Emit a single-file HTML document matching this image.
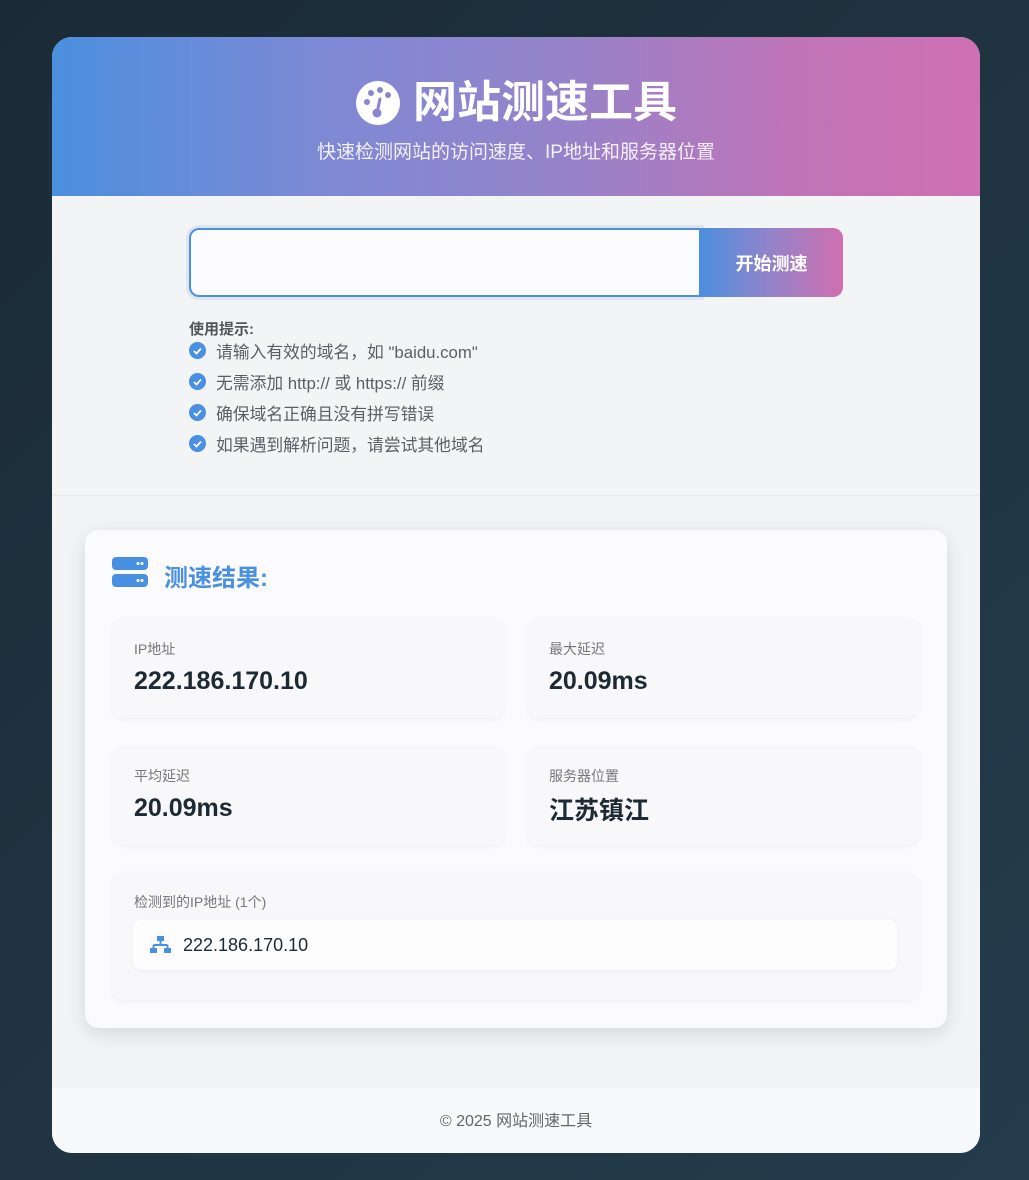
<!DOCTYPE html>
<html><head><meta charset="utf-8"><style>
*{box-sizing:border-box;margin:0;padding:0}
body{width:1029px;height:1180px;background:linear-gradient(135deg,#1b2b36,#243c4c);font-family:"Liberation Sans","Noto Sans CJK SC",sans-serif;position:relative;overflow:hidden}
.wrap{position:absolute;left:52px;top:37px;width:928px;height:1116px;border-radius:20px;overflow:hidden;background:#f3f4f5}
.hdr{height:159px;background:linear-gradient(90deg,#4c8fdf 0%,#7f89d4 30%,#9583c9 55%,#c074b8 80%,#cf70b2 100%);text-align:center;color:#fff}
.hdr h1{padding-top:41px;font-size:44px;font-weight:bold;line-height:50px;display:flex;justify-content:center;align-items:center;gap:12px}
.hdr p{margin-top:9px;font-size:19px;color:#f4f0fa}
.inp{position:absolute;left:137px;top:191px;width:512px;height:69px;border:2px solid #4a90e2;border-radius:10px 0 0 10px;background:#fbfbfd;box-shadow:0 0 0 3px #dfe5ec}
.btn{position:absolute;left:648px;top:191px;width:143px;height:69px;border-radius:0 10px 10px 0;background:linear-gradient(90deg,#4c8fdf,#9583c9,#d06fb0);color:#fff;font-weight:bold;font-size:18px;display:flex;align-items:center;justify-content:center}
.tips{position:absolute;left:137px;top:283px;color:#5a5f66;font-size:16.8px}
.tips b{display:block;font-size:15px;color:#555;line-height:20px}
.tips div{display:flex;align-items:center;height:31px}
.tips b+div{margin-top:-5px}
.ck{width:17px;height:17px;border-radius:50%;background:#4a90e2;margin-right:10px;display:inline-flex;align-items:center;justify-content:center}
.div{position:absolute;left:0;right:0;top:458px;border-top:1px solid #e6e8ea}
.card{position:absolute;left:33px;top:493px;width:862px;height:498px;background:#fbfbfd;border-radius:14px;box-shadow:0 6px 20px rgba(40,60,90,.15)}
.card h2{position:absolute;left:79px;top:28px;font-size:24px;color:#4a90e2;font-weight:bold}
.st{position:absolute;background:#f8f8fa;border-radius:12px;box-shadow:0 2px 6px rgba(0,0,0,.04);padding:0 22px}
.st .l{font-size:14px;color:#777;margin-top:21px}
.st .v{font-size:25px;font-weight:bold;color:#1d2a33;margin-top:8px}
.ipr{position:absolute;left:21px;top:48px;width:764px;height:50px;background:#fdfdfe;border-radius:8px;box-shadow:0 1px 4px rgba(0,0,0,.05);display:flex;align-items:center;padding-left:17px;font-size:18px;color:#1d2a33}
.ft{position:absolute;left:0;right:0;bottom:0;height:65px;background:#f8f9fa;text-align:center;line-height:68px;color:#666;font-size:16px}
</style></head><body>
<div class="wrap">
<div class="hdr"><h1><svg width="46" height="46" viewBox="0 0 46 46"><circle cx="23" cy="23" r="22" fill="#fff"/><circle cx="12" cy="22" r="3" fill="#8a86cf"/><circle cx="16" cy="13" r="3" fill="#8a86cf"/><circle cx="25" cy="10" r="3" fill="#8a86cf"/><circle cx="33" cy="15" r="3" fill="#8a86cf"/><path d="M22 33 L25 19" stroke="#8a86cf" stroke-width="3" stroke-linecap="round"/><circle cx="22" cy="33" r="4.5" fill="#8a86cf"/></svg>网站测速工具</h1><p>快速检测网站的访问速度、IP地址和服务器位置</p></div>
<div class="inp"></div><div class="btn">开始测速</div>
<div class="tips"><b>使用提示:</b>
<div><span class="ck"><svg width="9" height="8" viewBox="0 0 9 8"><path d="M1 4l2.5 2.5L8 1.5" stroke="#fff" stroke-width="1.8" fill="none"/></svg></span>请输入有效的域名，如 "baidu.com"</div>
<div><span class="ck"><svg width="9" height="8" viewBox="0 0 9 8"><path d="M1 4l2.5 2.5L8 1.5" stroke="#fff" stroke-width="1.8" fill="none"/></svg></span>无需添加 http:// 或 https:// 前缀</div>
<div><span class="ck"><svg width="9" height="8" viewBox="0 0 9 8"><path d="M1 4l2.5 2.5L8 1.5" stroke="#fff" stroke-width="1.8" fill="none"/></svg></span>确保域名正确且没有拼写错误</div>
<div><span class="ck"><svg width="9" height="8" viewBox="0 0 9 8"><path d="M1 4l2.5 2.5L8 1.5" stroke="#fff" stroke-width="1.8" fill="none"/></svg></span>如果遇到解析问题，请尝试其他域名</div>
</div>
<div class="div"></div>
<div class="card">
<svg style="position:absolute;left:27px;top:27px" width="36" height="32" viewBox="0 0 36 32"><rect x="0" y="0" width="36" height="13" rx="4" fill="#4a90e2"/><rect x="0" y="17" width="36" height="13" rx="4" fill="#4a90e2"/><circle cx="26" cy="6.5" r="1.5" fill="#fff"/><circle cx="30" cy="6.5" r="1.5" fill="#fff"/><circle cx="26" cy="23.5" r="1.5" fill="#fff"/><circle cx="30" cy="23.5" r="1.5" fill="#fff"/></svg>
<h2>测速结果:</h2>
<div class="st" style="left:27px;top:88px;width:393px;height:100px"><div class="l">IP地址</div><div class="v">222.186.170.10</div></div>
<div class="st" style="left:442px;top:88px;width:392px;height:100px"><div class="l">最大延迟</div><div class="v">20.09ms</div></div>
<div class="st" style="left:27px;top:215px;width:393px;height:100px"><div class="l">平均延迟</div><div class="v">20.09ms</div></div>
<div class="st" style="left:442px;top:215px;width:392px;height:100px"><div class="l">服务器位置</div><div class="v" style="margin-top:5px">江苏镇江</div></div>
<div class="st" style="left:27px;top:342px;width:807px;height:128px"><div class="l" style="margin-top:20px">检测到的IP地址 (1个)</div>
<div class="ipr"><svg width="21" height="18" viewBox="0 0 21 18" style="margin-right:12px"><rect x="7" y="0" width="7" height="5" fill="#4a90e2"/><path d="M10.5 5v4M3.5 9h14M3.5 9v3M17.5 9v3" stroke="#4a90e2" stroke-width="2" fill="none"/><rect x="0" y="12" width="7" height="5" fill="#4a90e2"/><rect x="14" y="12" width="7" height="5" fill="#4a90e2"/></svg>222.186.170.10</div></div>
</div>
<div class="ft">© 2025 网站测速工具</div>
</div>
</body></html>
